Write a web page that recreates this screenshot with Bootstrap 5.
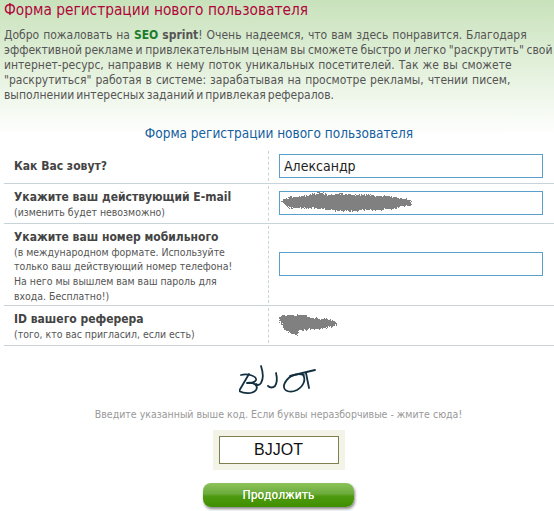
<!DOCTYPE html>
<html lang="ru">
<head>
<meta charset="utf-8">
<title>Форма регистрации</title>
<link href="https://cdn.jsdelivr.net/npm/bootstrap@5.3.0/dist/css/bootstrap.min.css" rel="stylesheet">
<style>
html,body{height:511px;overflow:hidden}
body{background:#fff linear-gradient(#c8e2bb 0,#e6f2df 75px,#fff 135px) no-repeat;font-family:"DejaVu Sans Condensed","Noto Sans",sans-serif;font-size:12px;line-height:15px;color:#555}
.page-ttl{font-size:15.3px;line-height:20px;font-weight:400;color:#b0063a;margin:0;padding:0 0 0 4px}
.intro{margin:8px 0 0;padding:0 0 0 4px;white-space:nowrap;height:75px}
.intro span.ln{display:block}
.ws-wide{word-spacing:.55px}
.ws-tight{word-spacing:-.75px}
.ws-tighter{word-spacing:-1.4px}
.brand-a{color:#1b7d2c;font-weight:700}
.brand-b{color:#555;font-weight:700}
.form-ttl{font-size:13.5px;line-height:18px;font-weight:400;color:#14609f;text-align:center;margin:21px 0 0;padding-left:4px;height:25px}
.reg-row{margin-left:4px;border-bottom:1px solid #c8d3da}
.reg-l{width:264px;padding-left:10px;padding-top:3px;flex:none}
.reg-r{flex:1;border-left:1px dashed #c8d3da;padding-left:10px;padding-right:11px;padding-bottom:2px;margin:2px 0}
.lbl{font-weight:700;font-size:12px;line-height:15px;color:#444;display:block}
.hint{font-size:10.45px;line-height:14.6px;color:#555;display:block}
.fld{display:block;width:264px;height:24px;border:1px solid #5b9fcb;background:#fff;padding:0 4px;font-size:14px;color:#222;border-radius:0;font-family:"DejaVu Sans Condensed",sans-serif}
.fld-wrap{width:264px}
.blob{display:block}
.rh-a{height:35px}
.rh-b{height:40px}
.rh-c{height:82px}
.rh-d{height:40px}
.rh-a .reg-l{padding-top:1px}
.rh-a .reg-r{padding-bottom:0}
.rh-c .reg-l{padding-top:4px}
.rh-d .reg-l{padding-top:2px}
.foot-area{padding-left:3px}
.capt{display:block;margin:18px auto 0}
.capt-note{font-size:10.5px;line-height:14px;color:#999;text-align:center;margin:11px 0 0}
.capt-box{width:132px;height:40px;background:#f3f3e8;margin:9px auto 0;padding:6px}
.capt-inp{display:block;width:120px;height:28px;border:1px solid #80804f;background:#fff;text-align:center;font-family:"Liberation Sans",sans-serif;font-size:16px;color:#111;padding:0;border-radius:0}
.go-btn{display:block;width:151px;height:24px;margin:13px auto 0;padding:0;border:0;border-radius:8px;background:linear-gradient(#8cc35a 0,#6cab3c 45%,#4f9a10 55%,#3f8f00 100%);color:#fff;font-size:12px;font-weight:400;line-height:24px;box-shadow:1px 2px 3px #888;text-shadow:0 0 .6px #fff}
</style>
</head>
<body>
<svg width="0" height="0" class="position-absolute"><filter id="nz" x="-10%" y="-30%" width="120%" height="160%"><feTurbulence type="fractalNoise" baseFrequency=".8" numOctaves="1" seed="4"/><feDisplacementMap in="SourceGraphic" scale="5" xChannelSelector="R" yChannelSelector="G"/></filter></svg>
<h1 class="page-ttl">Форма регистрации нового пользователя</h1>
<p class="intro"><span class="ln ws-wide">Добро пожаловать на <span class="brand-a">SEO</span> <span class="brand-b">sprint</span>! Очень надеемся, что вам здесь понравится. Благодаря</span><span class="ln ws-tight">эффективной рекламе и привлекательным ценам вы сможете быстро и легко "раскрутить" свой</span><span class="ln ws-wide">интернет-ресурс, направив к нему поток уникальных посетителей. Так же вы сможете</span><span class="ln ws-wide">"раскрутиться" работая в системе: зарабатывая на просмотре рекламы, чтении писем,</span><span class="ln ws-tighter">выполнении интересных заданий и привлекая рефералов.</span></p>
<h2 class="form-ttl">Форма регистрации нового пользователя</h2>
<form>
<div class="reg-row d-flex rh-a">
<div class="reg-l d-flex flex-column justify-content-center"><span class="lbl">Как Вас зовут?</span></div>
<div class="reg-r d-flex align-items-center"><input class="fld" type="text" value="Александр"></div>
</div>
<div class="reg-row d-flex rh-b">
<div class="reg-l d-flex flex-column justify-content-center"><span class="lbl">Укажите ваш действующий E-mail</span><span class="hint">(изменить будет невозможно)</span></div>
<div class="reg-r d-flex align-items-center"><div class="fld-wrap position-relative"><input class="fld" type="text" aria-label="E-mail">
<svg class="position-absolute top-0 start-0" width="140" height="24" viewBox="0 0 140 24"><path shape-rendering="crispEdges" filter="url(#nz)" fill="#808080" d="M3 10L4 8 9 7 11 5 15 6 29 5 33 3 42 2 45 3 50 4 60 3 85 4 104 5 118 6 125 8 130 9 133 12 130 15 124 15 118 17 100 19 60 20 35 17 12 17 8 16 6 14z"/></svg></div></div>
</div>
<div class="reg-row d-flex rh-c">
<div class="reg-l d-flex flex-column justify-content-center"><span class="lbl">Укажите ваш номер мобильного</span><span class="hint">(в международном формате. Используйте<br>только ваш действующий номер телефона!<br>На него мы вышлем вам ваш пароль для<br>входа. Бесплатно!)</span></div>
<div class="reg-r d-flex align-items-center"><input class="fld" type="text" aria-label="Телефон"></div>
</div>
<div class="reg-row d-flex rh-d">
<div class="reg-l d-flex flex-column justify-content-center"><span class="lbl">ID вашего реферера</span><span class="hint">(того, кто вас пригласил, если есть)</span></div>
<div class="reg-r d-flex align-items-center"><svg class="blob" width="60" height="22" viewBox="0 0 60 22"><path shape-rendering="crispEdges" filter="url(#nz)" fill="#808080" d="M0 3L3 1 27 1 30 4 47 5 58 8 57 12 39 15 20 16 18 21 13 20 5 15 3 10 0 7z"/></svg></div>
</div>
<div class="foot-area">
<svg class="capt" width="80" height="32" viewBox="2 0 80 32" fill="none" stroke="#12303f" stroke-width="1.8" stroke-linecap="round" stroke-linejoin="round"><path d="M12 10 2 27M4 11C10 9 20 12 19 16 18 19 12 19 10 19 16 18 22 21 19 26 15 31 6 29 2 27"/><path d="M24 2C26 8 27 14 24 19 22 22 20 21 19 20"/><path d="M39 9C40 13 40 19 38 22 36 24 33 24 31 22"/><path d="M67 11C58 8 50 13 47 21 46 28 54 29 60 26 67 22 69 15 66 11"/><path d="M53 12 78 6M69 9 72 24"/></svg>
<p class="capt-note">Введите указанный выше код. Если буквы неразборчивые - жмите сюда!</p>
<div class="capt-box"><input class="capt-inp" type="text" value="BJJOT" aria-label="Код"></div>
<button class="go-btn" type="button">Продолжить</button>
</div>
</form>
</body>
</html>
